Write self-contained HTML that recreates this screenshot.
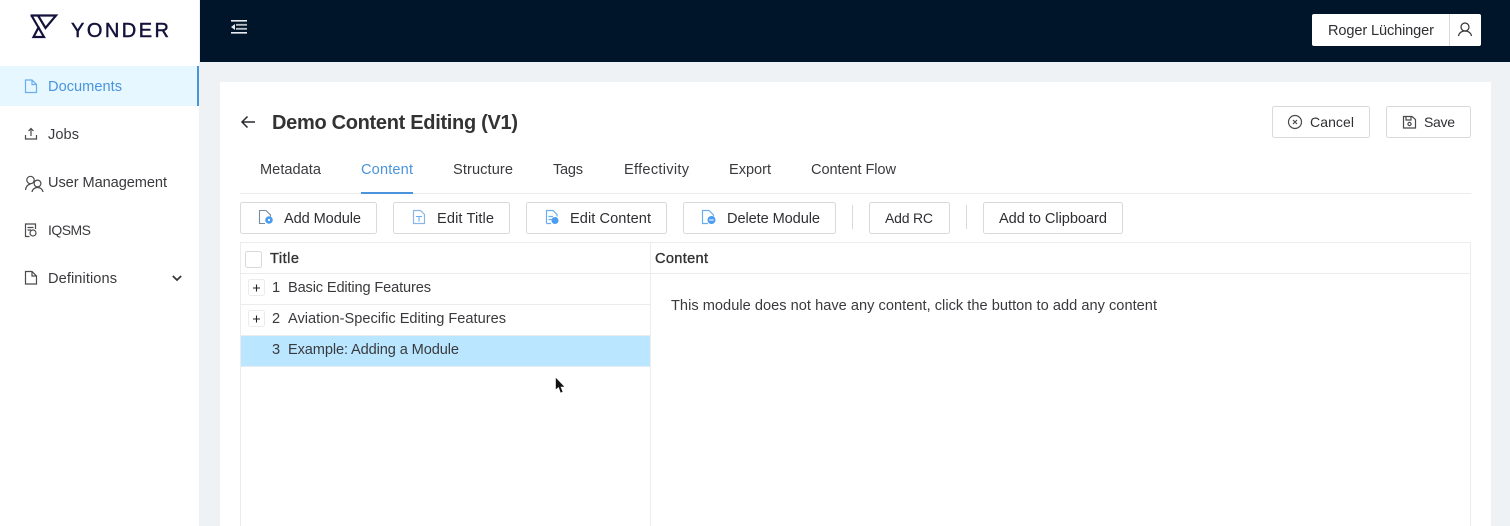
<!DOCTYPE html>
<html lang="en">
<head>
<meta charset="utf-8">
<title>Demo Content Editing</title>
<style>
html,body{margin:0;padding:0;width:1510px;height:526px;overflow:hidden;background:#eff2f5}
svg{display:block}
text{font-family:"Liberation Sans",Arial,sans-serif;font-size:14.6px;fill:#2f2f33}
.nav{fill:#3a3a3e}
.s{font-size:14px}
.b{fill:#fff;stroke:#d9d9d9;stroke-width:1}
.ln{stroke:#ececec;stroke-width:1}
.ic{fill:none;stroke:#4a4a4e;stroke-width:1.2}
.bl{fill:none;stroke:#6aaef0;stroke-width:1.2}
.h{stroke:#333;stroke-width:.35}
</style>
</head>
<body>
<svg width="1510" height="526" viewBox="0 0 1510 526" xmlns="http://www.w3.org/2000/svg">
<!-- layout -->
<rect width="1510" height="526" fill="#eff2f5"/>
<rect x="0" y="0" width="199" height="526" fill="#fff"/>
<rect x="200" y="0" width="1310" height="62" fill="#001529"/>
<rect x="220" y="82" width="1271" height="444" fill="#fff"/>

<!-- logo -->
<g fill="none" stroke="#14123a" stroke-width="2.200">
<path d="M30.500 15.500H56L45.500 28L38 15.500"/>
<path d="M31.500 15.500L44 37H33.500L39 26.500"/>
</g>
<text x="71" y="37" textLength="98" lengthAdjust="spacing" style="font-size:20px;fill:#14123a;stroke:#14123a;stroke-width:.45">YONDER</text>

<!-- sidebar -->
<rect x="0" y="66" width="197" height="40" fill="#e6f7ff"/>
<rect x="197" y="66" width="2" height="40" fill="#4a94dc"/>
<path class="bl" d="M25.500 80H32L36.500 84.500V92.500H25.500Z M32 80V84.500H36.500"/>
<text x="48" y="91" textLength="74" lengthAdjust="spacing" style="fill:#4a94dc">Documents</text>

<path class="ic" d="M25.500 135V139H36.500V135 M31 136V128.500 M28.500 131L31 128.500L33.500 131"/>
<text class="nav" x="48" y="139" textLength="31" lengthAdjust="spacing">Jobs</text>

<circle class="ic" cx="30.500" cy="180" r="3.700"/>
<circle class="ic" cx="37.500" cy="183.500" r="3.400"/>
<path class="ic" d="M25.500 190C26 186.500 28 184.500 30.500 184 M32 192C32.500 189 35 187.500 37.500 187.500C40 187.500 42.500 189 43 192"/>
<text class="nav" x="48" y="187" textLength="119" lengthAdjust="spacing">User Management</text>

<path class="ic" d="M35.500 229V224H25.500V236.500H29.500 M27.500 227.500H33.500 M27.500 230H31"/>
<circle class="ic" cx="33" cy="233" r="3"/>
<text class="nav s" x="48" y="235" textLength="43" lengthAdjust="spacing">IQSMS</text>

<path class="ic" d="M25.500 271.500H32L36.500 276V284H25.500Z M32 271.500V276H36.500"/>
<text class="nav" x="48" y="283" textLength="69" lengthAdjust="spacing">Definitions</text>
<path d="M172.800 276L177 280L181.200 276" fill="none" stroke="#3a3a3e" stroke-width="1.800"/>

<!-- header -->
<g stroke="#e8eaee" stroke-width="1.600" fill="none">
<path d="M231 20.800H247 M231 32.800H247"/>
</g>
<g stroke="#b8bcc4" stroke-width="1.800" fill="none">
<path d="M236 24.800H247 M236 28.800H247"/>
</g>
<path d="M231 27L235 24V30Z" fill="#e8eaee"/>

<rect x="1312" y="14" width="169" height="32" rx="2" fill="#fff"/>
<line x1="1449.500" y1="14" x2="1449.500" y2="46" stroke="#d9d9d9"/>
<text x="1328" y="35" textLength="106" lengthAdjust="spacing">Roger Lüchinger</text>
<circle class="ic" cx="1465" cy="27" r="4" style="stroke:#333"/>
<path class="ic" d="M1458.500 36C1459 33 1461.500 31 1465 31C1468.500 31 1471 33 1471.500 36" style="stroke:#333"/>

<!-- title -->
<path d="M255 122H242 M247.500 116.500L242 122L247.500 127.500" fill="none" stroke="#2a2a2e" stroke-width="1.500"/>
<text x="272" y="129" textLength="246" lengthAdjust="spacing" style="font-size:20px;font-weight:bold;fill:#333">Demo Content Editing (V1)</text>

<rect class="b" x="1272.500" y="106.500" width="97" height="31" rx="2"/>
<circle class="ic" cx="1295" cy="122" r="6.500"/>
<path class="ic" d="M1293 120L1297 124M1297 120L1293 124"/>
<text class="s" x="1310" y="127" textLength="44" lengthAdjust="spacing">Cancel</text>

<rect class="b" x="1386.500" y="106.500" width="84" height="31" rx="2"/>
<path class="ic" d="M1403.500 116.500H1412L1415.500 119.500V128H1403.500Z M1406 116.500V120H1411V116.500"/>
<circle class="ic" cx="1409.500" cy="124" r="1.600"/>
<text class="s" x="1424" y="127" textLength="31" lengthAdjust="spacing">Save</text>

<!-- tabs -->
<text class="nav" x="260" y="174" textLength="61" lengthAdjust="spacing">Metadata</text>
<text x="361" y="174" textLength="52" lengthAdjust="spacing" style="fill:#4a94dc">Content</text>
<text class="nav" x="453" y="174" textLength="60" lengthAdjust="spacing">Structure</text>
<text class="nav" x="553" y="174" textLength="30" lengthAdjust="spacing">Tags</text>
<text class="nav" x="624" y="174" textLength="65" lengthAdjust="spacing">Effectivity</text>
<text class="nav" x="729" y="174" textLength="42" lengthAdjust="spacing">Export</text>
<text class="nav" x="811" y="174" textLength="85" lengthAdjust="spacing">Content Flow</text>
<line class="ln" x1="240" y1="193.500" x2="1471" y2="193.500"/>
<rect x="361" y="192" width="52" height="2" fill="#4a94dc"/>

<!-- toolbar -->
<rect class="b" x="240.500" y="202.500" width="136" height="31" rx="2"/>
<path d="M265 223.500H259.500V210.500H266L270.500 215V216.500" fill="none" stroke="#7a8a9c" stroke-width="1.100"/>
<circle cx="269" cy="220" r="3.800" fill="#4a9df0"/>
<circle cx="269" cy="220" r="1.100" fill="#fff"/>
<text x="284" y="223" textLength="77" lengthAdjust="spacing">Add Module</text>

<rect class="b" x="393.500" y="202.500" width="116" height="31" rx="2"/>
<path class="bl" d="M413.500 210.500H420.500L424.500 214.500V223.500H413.500Z" style="stroke:#8ab6e6"/>
<path d="M416 216.500H422M419 216.500V221.500" fill="none" stroke="#6aaef0" stroke-width="1.100"/>
<text x="437" y="223" textLength="57" lengthAdjust="spacing">Edit Title</text>

<rect class="b" x="526.500" y="202.500" width="140" height="31" rx="2"/>
<path class="bl" d="M546.500 223.500V210.500H553L557 214.500V216.500 M548.500 216.500H553 M548.500 219.500H552 M546.500 223.500H551"/>
<circle cx="555" cy="220.500" r="3.500" fill="#4a9df0"/>
<text x="570" y="223" textLength="81" lengthAdjust="spacing">Edit Content</text>

<rect class="b" x="683.500" y="202.500" width="152" height="31" rx="2"/>
<path class="bl" d="M708 223.500H702.500V210.500H709L713.500 215V216.500"/>
<circle cx="711.500" cy="220" r="4" fill="#4a9df0"/>
<path d="M709.300 220H713.700" stroke="#fff" stroke-width="1.100"/>
<text x="727" y="223" textLength="93" lengthAdjust="spacing">Delete Module</text>

<line x1="852.500" y1="205" x2="852.500" y2="229" stroke="#d9d9d9"/>
<rect class="b" x="869.500" y="202.500" width="80" height="31" rx="2"/>
<text class="s" x="885" y="223" textLength="48" lengthAdjust="spacing">Add RC</text>
<line x1="966.500" y1="205" x2="966.500" y2="229" stroke="#d9d9d9"/>
<rect class="b" x="983.500" y="202.500" width="139" height="31" rx="2"/>
<text x="999" y="223" textLength="108" lengthAdjust="spacing">Add to Clipboard</text>

<!-- table -->
<path class="ln" fill="none" d="M240.500 526V242.500H1470.500V526 M650.500 242.500V526 M240.500 273.500H1470.500 M240.500 304.500H650.500"/>
<rect x="245.500" y="251.500" width="16" height="16" rx="2" fill="#fff" stroke="#d9d9d9"/>
<text x="270" y="263" textLength="29" lengthAdjust="spacing" class="h" style="fill:#333">Title</text>
<text x="655" y="263" textLength="53" lengthAdjust="spacing" class="h" style="fill:#333">Content</text>

<rect x="248.500" y="279.500" width="16" height="16" rx="2" fill="#fff" stroke="#ececec"/>
<path d="M253 288H260M256.500 284.500V291.500" stroke="#222" stroke-width="1.100"/>
<text x="272" y="292" class="nav">1</text>
<text x="288" y="292" textLength="143" lengthAdjust="spacing" class="nav">Basic Editing Features</text>

<rect x="248.500" y="310.500" width="16" height="16" rx="2" fill="#fff" stroke="#ececec"/>
<path d="M253 319H260M256.500 315.500V322.500" stroke="#222" stroke-width="1.100"/>
<text x="272" y="323" class="nav">2</text>
<text x="288" y="323" textLength="218" lengthAdjust="spacing" class="nav">Aviation-Specific Editing Features</text>

<line class="ln" x1="240.500" y1="335.500" x2="650" y2="335.500"/>
<rect x="241" y="336" width="409" height="30" fill="#bae7ff"/>
<line x1="241" y1="366.500" x2="650" y2="366.500" stroke="#e4eef2"/>
<text x="272" y="354" class="nav">3</text>
<text x="288" y="354" textLength="171" lengthAdjust="spacing" class="nav">Example: Adding a Module</text>

<text x="671" y="310" textLength="486" lengthAdjust="spacing" class="nav">This module does not have any content, click the button to add any content</text>

<!-- cursor -->
<path d="M555.500 377V390L558.500 387.500L560.500 393L563 392L561 387H565Z" fill="#111" stroke="#fff" stroke-width="0.600"/>
</svg>
</body>
</html>
